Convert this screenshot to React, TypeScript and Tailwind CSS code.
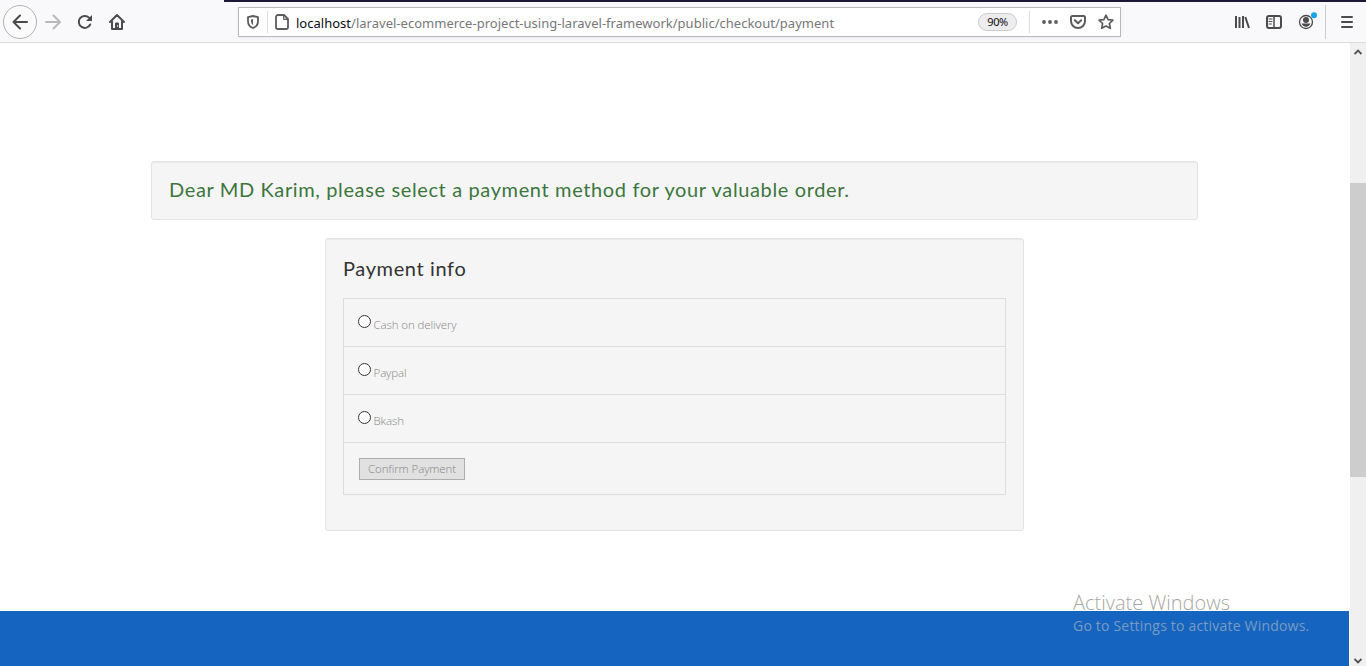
import React from "react";

const stroke = {
  fill: "none",
  stroke: "#4b4b4d",
  strokeWidth: 2,
  strokeLinecap: "round" as const,
  strokeLinejoin: "round" as const,
};

function Icon({ children, className = "" }: { children: React.ReactNode; className?: string }) {
  return (
    <svg viewBox="0 0 16 16" className={`block h-4 w-4 shrink-0 ${className}`} {...stroke}>
      {children}
    </svg>
  );
}

function NavButtons() {
  return (
    <div className="flex h-[44px] w-[238px] shrink-0 items-center pl-[3px]">
      <div className="flex h-[34px] w-[34px] items-center justify-center rounded-full border border-[#b2b2b5] bg-[#fbfbfc]">
        <Icon>
          <path d="M15 8H1.5M8 1.5L1.5 8L8 14.5" />
        </Icon>
      </div>
      <Icon className="ml-[8px]">
        <path d="M1 8h13.5M8.500 1.500L15 8L8.500 14.500" stroke="#b9b9bb" />
      </Icon>
      <Icon className="ml-[16px]">
        <path d="M13.200 10.500A6 6 0 1 1 12 3.600L14 5.600" />
        <path d="M15 1v6H9z" fill="#4b4b4d" stroke="none" />
      </Icon>
      <Icon className="ml-[16px]">
        <path d="M1 8L8 1L15 8M3 7.500V15H13V7.500" />
        <path d="M6 15V9.500a1 1 0 0 1 1-1h2a1 1 0 0 1 1 1V15z" fill="#4b4b4d" stroke="none" />
        <circle cx="8.600" cy="12" r=".7" fill="#fff" stroke="none" />
      </Icon>
    </div>
  );
}

function AddressBar() {
  return (
    <div className="flex h-[30px] w-[883px] shrink-0 items-center border border-[#b9b9bb] bg-white shadow-[0_1px_3px_rgba(0,0,0,0.06)]">
      <svg viewBox="0 0 12 14" className="ml-[8px] block h-[14px] w-[12px] shrink-0" {...stroke} stroke="#5c5c5c">
        <path d="M6 1L11 2.200V6C11 9.500 9 12 6 13C3 12 1 9.500 1 6V2.200Z" strokeWidth="1.800" />
        <path d="M6 4v6C4.600 9 4 7.500 4 6V4.400z" fill="#5c5c5c" stroke="none" />
      </svg>
      <div className="ml-[8px] h-[22px] w-px shrink-0 bg-[#dedee0]" />
      <svg viewBox="0 0 14 16" className="ml-[7px] block h-[16px] w-[14px] shrink-0" {...stroke} stroke="#5c5c5c">
        <path d="M3 1H9L13 5V13.500A1.500 1.500 0 0 1 11.500 15H2.500A1.500 1.500 0 0 1 1 13.500V3A2 2 0 0 1 3 1Z" strokeWidth="1.800" />
        <path d="M8.700 1.500V5.300H12.500" strokeWidth="1.200" />
      </svg>
      <div className="ml-[7px] w-[682px] shrink-0 whitespace-nowrap pt-[2px] font-['Noto_Sans','Open_Sans',sans-serif] text-[13px] leading-[20px] text-[#77777a]">
        <span className="inline-block tracking-[0.015px]">
          <span className="text-[#0c0c0d]">localhost</span>/laravel-ecommerce-project-using-laravel-framework/public/checkout/payment
        </span>
      </div>
      <div className="flex h-[18px] w-[39px] shrink-0 items-center justify-center rounded-full border border-[#ccccce] bg-[#ededf0] pt-px font-['Noto_Sans',sans-serif] text-[11px] tracking-[-0.4px] text-[#0c0c0d]">
        90%
      </div>
      <div className="ml-[12px] h-[22px] w-px shrink-0 bg-[#dedee0]" />
      <Icon className="ml-[12px]">
        <g fill="#5c5c5c" stroke="none">
          <circle cx="2" cy="8" r="1.900" />
          <circle cx="8" cy="8" r="1.900" />
          <circle cx="14" cy="8" r="1.900" />
        </g>
      </Icon>
      <Icon className="ml-[12px]">
        <path d="M2.300 2H13.700A1.300 1.300 0 0 1 15 3.300V7A7 7 0 0 1 1 7V3.300A1.300 1.300 0 0 1 2.300 2Z M4.800 6.300L8 9.300L11.200 6.300" stroke="#5c5c5c" />
      </Icon>
      <Icon className="ml-[12px]">
        <path d="M8 1.200L10.100 5.600L14.900 6.200L11.400 9.500L12.300 14.300L8 12L3.700 14.300L4.600 9.500L1.100 6.200L5.900 5.600Z" stroke="#5c5c5c" strokeWidth="1.700" />
      </Icon>
    </div>
  );
}

function BrowserTools() {
  return (
    <div className="flex h-[44px] min-w-0 flex-1 items-center pl-[113px]">
      <Icon>
        <path d="M2 2V14M5.500 3V14M9 2V14M11.300 3L15 14" strokeLinecap="butt" />
      </Icon>
      <Icon className="ml-[16px]">
        <rect x="1" y="2" width="14" height="12" rx="2" />
        <path d="M8 2V14" strokeWidth="1.500" />
        <path d="M3 5H6M3 7.500H6M3 10H5.500" strokeWidth="1" />
      </Icon>
      <svg viewBox="0 0 20 20" className="ml-[15px] block h-5 w-5 shrink-0" {...stroke}>
        <circle cx="9" cy="10" r="6.500" strokeWidth="1.300" />
        <circle cx="9" cy="8" r="3" fill="#4b4b4d" stroke="none" />
        <path d="M4.500 11.500H13.500A4.800 4.800 0 0 1 4.500 11.500Z" fill="#4b4b4d" stroke="none" />
        <circle cx="17" cy="3.200" r="3" fill="#14a4ea" stroke="none" />
      </svg>
      <div className="ml-[8px] h-[34px] w-px shrink-0 bg-[#cbcbcd]" />
      <Icon className="ml-[13px]">
        <path d="M3 3H13M3 8H13M3 13H13" />
      </Icon>
    </div>
  );
}

function PaymentOption({ label }: { label: string }) {
  return (
    <label className="flex h-12 border-b border-[#dddddd] pl-[14px]">
      <input
        type="radio"
        name="payment"
        className="mt-[16px] h-[13px] w-[13px] shrink-0 appearance-none rounded-full border border-[#333333] bg-white"
      />
      <span className="ml-[2.500px] mt-[17px] whitespace-nowrap text-[11.500px] leading-[18px] tracking-[-0.1px]">{label}</span>
    </label>
  );
}

export default function App() {
  return (
    <div className="relative flex h-[666px] w-[1366px] flex-col overflow-hidden bg-white">
      <header className="flex h-[43px] shrink-0 flex-col border-b border-[#dcdcde] bg-[#f9f9fb]">
        <div className="ml-[224px] h-[2px] shrink-0 bg-[#1c1833]" />
        <div className="flex h-[40px] items-center">
          <NavButtons />
          <AddressBar />
          <BrowserTools />
        </div>
      </header>

      <div className="flex min-h-0 flex-1">
        <main className="flex w-[1349px] shrink-0 flex-col items-center font-['Open_Sans',sans-serif] font-light text-[#868686]">
          <section className="mt-[118px] h-[59px] w-[1047px] shrink-0 rounded-[3px] border border-[#e3e3e3] bg-[#f5f5f5] px-[17px] pt-[14px] shadow-[inset_0_1px_1px_rgba(0,0,0,0.05)]">
            <h3 className="whitespace-nowrap font-['Lato',sans-serif] text-[20px] font-normal leading-[27px] text-[#3c763d]">
              <span className="inline-block tracking-[0.63px]">
                Dear MD Karim, please select a payment method for your valuable order.
              </span>
            </h3>
          </section>

          <section className="mt-[18px] h-[293px] w-[699px] shrink-0 rounded-[3px] border border-[#e3e3e3] bg-[#f5f5f5] px-[17px] pt-[14px] shadow-[inset_0_1px_1px_rgba(0,0,0,0.05)]">
            <h3 className="whitespace-nowrap font-['Lato',sans-serif] text-[20px] font-normal leading-[30px] text-[#333333]">
              <span className="inline-block tracking-[0.63px]">Payment info</span>
            </h3>
            <form className="mt-[15px] h-[197px] w-[663px] border border-[#dddddd]">
              <PaymentOption label="Cash on delivery" />
              <PaymentOption label="Paypal" />
              <PaymentOption label="Bkash" />
              <button
                type="button"
                className="ml-[15px] mt-[15px] flex h-[22px] w-[106px] items-center justify-center whitespace-nowrap border border-[#adadad] bg-[#e1e1e1] text-[11.500px] font-light tracking-[-0.1px]"
              >
                Confirm Payment
              </button>
            </form>
          </section>

          <footer className="mt-auto h-[55px] w-full shrink-0 bg-[#1565c0]" />
        </main>

        <aside className="ml-px flex w-4 flex-col items-center bg-[#f0f0f0]">
          <svg viewBox="0 0 8 6" className="mt-[6px] h-[6px] w-2 shrink-0" fill="none" stroke="#505050" strokeWidth="1.800">
            <path d="M.5 5L4 1.500L7.500 5" />
          </svg>
          <div className="mt-[128px] h-[294px] w-full shrink-0 bg-[#cdcdcd]" />
          <svg viewBox="0 0 8 6" className="mb-[2px] mt-auto h-[6px] w-2 shrink-0" fill="none" stroke="#505050" strokeWidth="1.800">
            <path d="M.5 1L4 4.500L7.500 1" />
          </svg>
        </aside>
      </div>

      <div className="absolute left-[1073px] top-[590px] whitespace-nowrap font-['Open_Sans',sans-serif]">
        <div className="text-[20px] font-light leading-[26px] text-[#8d8d8d]/80">
          <span className="inline-block">Activate Windows</span>
        </div>
        <div className="text-[14px] leading-[20px] text-[#a9b4c0]/70">
          <span className="inline-block tracking-[0.2px]">Go to Settings to activate Windows.</span>
        </div>
      </div>
    </div>
  );
}
